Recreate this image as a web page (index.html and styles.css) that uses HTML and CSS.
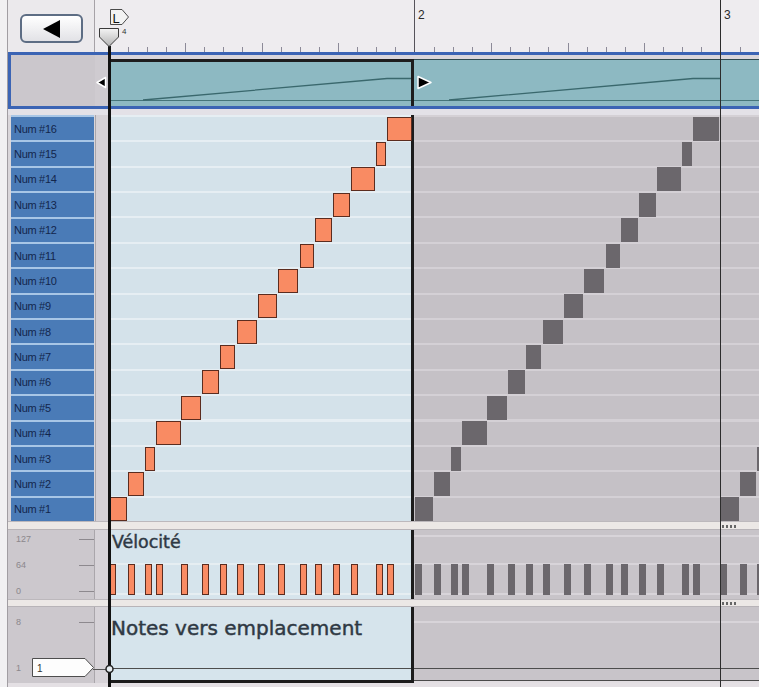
FILE: index.html
```html
<!DOCTYPE html>
<html>
<head>
<meta charset="utf-8">
<title>Editor</title>
<link rel="stylesheet" href="styles.css">
</head>
<body>
<div class="editor">
  <div class="gutter"></div>

  <div class="ruler-head">
    <button class="back-btn" type="button"><span class="tri-left"></span></button>
  </div>
  <div class="ruler">
    <svg class="ticks" width="664" height="52" viewBox="0 0 664 52">
      <path d="M33.5 47V52M52.5 47V52M71.5 47V52M109.5 47V52M128.5 47V52M147.5 47V52M186.5 47V52M205.5 47V52M224.5 47V52M262.5 47V52M281.5 47V52M300.5 47V52M339.5 47V52M358.5 47V52M377.5 47V52M415.5 47V52M434.5 47V52M453.5 47V52M492.5 47V52M511.5 47V52M530.5 47V52M568.5 47V52M587.5 47V52M606.5 47V52M645.5 47V52" stroke="#8c8a98" stroke-width="1"/>
      <path d="M90.5 43V52M167.5 43V52M243.5 43V52M396.5 43V52M473.5 43V52M549.5 43V52" stroke="#8c8a98" stroke-width="1"/>
      <path d="M319.5 0V52" stroke="#56535a" stroke-width="1"/>
    </svg>
    <span class="bar-num bar2">2</span>
    <span class="bar-num bar3">3</span>
    <svg class="loc-l" width="20" height="17" viewBox="0 0 20 17">
      <path d="M0.5 0.5H12L18.5 8L12 15.5H0.5Z" fill="#f3f3f3" stroke="#4a4a4a"/>
      <text x="2.5" y="13.5" font-size="13" font-family="Liberation Sans, Arial, sans-serif" fill="#111">L</text>
    </svg>
    <svg class="ph-head" width="22" height="21" viewBox="0 0 22 21">
      <defs>
        <linearGradient id="phg" x1="0" y1="0" x2="0" y2="1">
          <stop offset="0" stop-color="#f4f4f4"/>
          <stop offset="1" stop-color="#b4b4b4"/>
        </linearGradient>
      </defs>
      <path d="M1.5 1.5H20.5V10L11 19.5L1.5 10Z" fill="url(#phg)" stroke="#3a3a3a"/>
    </svg>
    <span class="ph-num">4</span>
  </div>

  <div class="overview">
    <div class="ov-label"></div>
    <div class="ov-narrow">
      <svg class="ov-left-mark" width="12" height="13" viewBox="0 0 12 13">
        <path d="M10.5 1.5L2 6.5L10.5 11.5Z" fill="#000" stroke="#fff" stroke-width="1.5" stroke-linejoin="round"/>
      </svg>
    </div>
    <svg class="ov-track" width="651" height="51" viewBox="0 0 651 51">
      <rect x="0" y="0" width="651" height="4" fill="#d9d6db"/>
      <rect x="0" y="4" width="651" height="47" fill="#8db9c2"/>
      <rect x="0" y="4" width="651" height="1" fill="#2f4a4e"/>
      <path d="M0 45.5H651" stroke="#46757a" stroke-width="1"/>
      <path d="M35 45L279 23.5H306M341 45L585 23.5H612" stroke="#3a686d" stroke-width="1.3" fill="none"/>
      <rect x="0" y="4" width="306" height="3" fill="#1d1d1d"/>
      <rect x="303" y="4" width="3" height="47" fill="#1d1d1d"/>
      <path d="M310 21.5L323 27.5L310 33.5Z" fill="#000" stroke="#fff" stroke-width="1.5" stroke-linejoin="round"/>
    </svg>
  </div>

  <div class="gap"></div>

  <div class="keys">
    <div class="key">Num #16</div>
    <div class="key">Num #15</div>
    <div class="key">Num #14</div>
    <div class="key">Num #13</div>
    <div class="key">Num #12</div>
    <div class="key">Num #11</div>
    <div class="key">Num #10</div>
    <div class="key">Num #9</div>
    <div class="key">Num #8</div>
    <div class="key">Num #7</div>
    <div class="key">Num #6</div>
    <div class="key">Num #5</div>
    <div class="key">Num #4</div>
    <div class="key">Num #3</div>
    <div class="key">Num #2</div>
    <div class="key">Num #1</div>
  </div>
  <div class="keys-side"></div>
  <div class="canvas notes-canvas">
    <div class="bar1"></div>
    <div class="rest"></div>
    <div class="n o" style="--i:15;--l:1;--w:18"></div>
    <div class="n o" style="--i:14;--l:20;--w:16"></div>
    <div class="n o" style="--i:13;--l:37;--w:10"></div>
    <div class="n o" style="--i:12;--l:48;--w:25"></div>
    <div class="n o" style="--i:11;--l:73;--w:20"></div>
    <div class="n o" style="--i:10;--l:94;--w:17"></div>
    <div class="n o" style="--i:9;--l:112;--w:15"></div>
    <div class="n o" style="--i:8;--l:129;--w:20"></div>
    <div class="n o" style="--i:7;--l:150;--w:19"></div>
    <div class="n o" style="--i:6;--l:170;--w:20"></div>
    <div class="n o" style="--i:5;--l:192;--w:14"></div>
    <div class="n o" style="--i:4;--l:207;--w:17"></div>
    <div class="n o" style="--i:3;--l:225;--w:17"></div>
    <div class="n o" style="--i:2;--l:243;--w:24"></div>
    <div class="n o" style="--i:1;--l:268;--w:10"></div>
    <div class="n o" style="--i:0;--l:279;--w:25"></div>

    <div class="n g" style="--i:15;--l:307;--w:18"></div>
    <div class="n g" style="--i:14;--l:326;--w:16"></div>
    <div class="n g" style="--i:13;--l:343;--w:10"></div>
    <div class="n g" style="--i:12;--l:354;--w:25"></div>
    <div class="n g" style="--i:11;--l:379;--w:20"></div>
    <div class="n g" style="--i:10;--l:400;--w:17"></div>
    <div class="n g" style="--i:9;--l:418;--w:15"></div>
    <div class="n g" style="--i:8;--l:435;--w:20"></div>
    <div class="n g" style="--i:7;--l:456;--w:19"></div>
    <div class="n g" style="--i:6;--l:476;--w:20"></div>
    <div class="n g" style="--i:5;--l:498;--w:14"></div>
    <div class="n g" style="--i:4;--l:513;--w:17"></div>
    <div class="n g" style="--i:3;--l:531;--w:17"></div>
    <div class="n g" style="--i:2;--l:549;--w:24"></div>
    <div class="n g" style="--i:1;--l:574;--w:10"></div>
    <div class="n g" style="--i:0;--l:585;--w:26"></div>

    <div class="n g" style="--i:15;--l:612;--w:19"></div>
    <div class="n g" style="--i:14;--l:632;--w:16"></div>
    <div class="n g" style="--i:13;--l:649;--w:10"></div>
  </div>

  <div class="sep sep-keys"><span class="dots"></span></div>

  <div class="lane-labels vel-labels">
    <div class="lrow"><span>127</span><span class="tick"></span></div>
    <div class="lrow"><span>64</span><span class="tick"></span></div>
    <div class="lrow"><span>0</span><span class="tick"></span></div>
  </div>
  <div class="lane-side vel-side"></div>
  <div class="canvas vel-canvas">
    <div class="bar1"><div class="lane-title">Vélocité</div></div>
    <div class="rest"></div>
    <div class="v vo" style="--l:1"></div>
    <div class="v vo" style="--l:20"></div>
    <div class="v vo" style="--l:37"></div>
    <div class="v vo" style="--l:48"></div>
    <div class="v vo" style="--l:73"></div>
    <div class="v vo" style="--l:94"></div>
    <div class="v vo" style="--l:112"></div>
    <div class="v vo" style="--l:129"></div>
    <div class="v vo" style="--l:150"></div>
    <div class="v vo" style="--l:170"></div>
    <div class="v vo" style="--l:192"></div>
    <div class="v vo" style="--l:207"></div>
    <div class="v vo" style="--l:225"></div>
    <div class="v vo" style="--l:243"></div>
    <div class="v vo" style="--l:268"></div>
    <div class="v vo" style="--l:279"></div>

    <div class="v vg" style="--l:307"></div>
    <div class="v vg" style="--l:326"></div>
    <div class="v vg" style="--l:343"></div>
    <div class="v vg" style="--l:354"></div>
    <div class="v vg" style="--l:379"></div>
    <div class="v vg" style="--l:400"></div>
    <div class="v vg" style="--l:418"></div>
    <div class="v vg" style="--l:435"></div>
    <div class="v vg" style="--l:456"></div>
    <div class="v vg" style="--l:476"></div>
    <div class="v vg" style="--l:498"></div>
    <div class="v vg" style="--l:513"></div>
    <div class="v vg" style="--l:531"></div>
    <div class="v vg" style="--l:549"></div>
    <div class="v vg" style="--l:574"></div>
    <div class="v vg" style="--l:585"></div>

    <div class="v vg" style="--l:612"></div>
    <div class="v vg" style="--l:632"></div>
    <div class="v vg" style="--l:649"></div>
  </div>

  <div class="sep sep-vel"><span class="dots dots2"></span></div>

  <div class="lane-labels pos-labels">
    <div class="lrow"><span>8</span><span class="tick"></span></div>
    <div class="lrow slot-row">
      <span class="slot-num">1</span>
      <svg class="slot-box" width="62" height="19" viewBox="0 0 62 19">
        <path d="M0.5 0.5H53L61.5 9.5L53 18.5H0.5Z" fill="#fdfdfd" stroke="#4e4e4e"/>
        <text x="5" y="14" font-size="10" font-family="Liberation Sans, Arial, sans-serif" fill="#333">1</text>
      </svg>
    </div>
  </div>
  <div class="lane-side pos-side"></div>
  <div class="canvas pos-canvas">
    <div class="bar1"><div class="lane-title pos-title">Notes vers emplacement</div></div>
    <div class="rest"></div>
  </div>

  <div class="bottom"></div>

  <div class="playhead"></div>
  <div class="barline3"></div>
  <svg class="slot-link" width="22" height="14" viewBox="0 0 22 14">
    <path d="M1 7.5H14" stroke="#555" stroke-width="1"/>
    <circle cx="17.5" cy="7" r="3.5" fill="#e8eef2" stroke="#222" stroke-width="1.5"/>
  </svg>
</div>
</body>
</html>
```

FILE: styles.css
```css
* { box-sizing: border-box; }

body {
  margin: 0;
  background: #ffffff;
}

.editor {
  position: relative;
  width: 759px;
  height: 687px;
  overflow: hidden;
  display: grid;
  grid-template-columns: 8px 87px 13px 651px;
  grid-template-rows: 52px 57px 6px 406px 9px 69px 8px 76px 4px;
  background: #e9e7ea;
  font-family: "Liberation Sans", Arial, sans-serif;
}

.gutter {
  grid-column: 1;
  grid-row: 1 / -1;
  background: #f1f0f2;
  border-right: 1px solid #a19da2;
}

/* ruler */
.ruler-head {
  grid-column: 2;
  grid-row: 1;
  background: #ebe9ec;
  border-right: 1px solid #a6a2a7;
  padding: 14px 0 0 12px;
}

.back-btn {
  width: 63px;
  height: 29px;
  padding: 0;
  border: 2px solid #5d6d84;
  border-radius: 6px;
  background: linear-gradient(#ffffff, #e2e2e6);
  display: flex;
  align-items: center;
  justify-content: center;
}

.tri-left {
  width: 0;
  height: 0;
  border-right: 17px solid #000;
  border-top: 9px solid transparent;
  border-bottom: 9px solid transparent;
}

.ruler {
  grid-column: 3 / 5;
  grid-row: 1;
  position: relative;
  background: #eeecef;
}

.ticks { display: block; }

.bar-num {
  position: absolute;
  top: 8px;
  font-size: 12px;
  line-height: 14px;
  color: #2a2a2a;
}
.bar2 { left: 323px; }
.bar3 { left: 629px; }

.loc-l {
  position: absolute;
  left: 15px;
  top: 9px;
  z-index: 6;
}

.ph-head {
  position: absolute;
  left: 3px;
  top: 27px;
  z-index: 6;
}

.ph-num {
  position: absolute;
  left: 27px;
  top: 27px;
  font-size: 8px;
  line-height: 9px;
  color: #333;
}

/* overview */
.overview {
  grid-column: 2 / 5;
  grid-row: 2;
  display: flex;
  border: 3px solid #3b64b4;
  border-right: 0;
}

.ov-label {
  width: 84px;
  flex: none;
  background: #cbc7cc;
}

.ov-narrow {
  width: 13px;
  flex: none;
  position: relative;
  background: #cfcbd0;
}

.ov-left-mark {
  position: absolute;
  left: 0;
  top: 21px;
}

.ov-track {
  display: block;
  flex: none;
}

.gap {
  grid-column: 2 / 5;
  grid-row: 3;
  background: #e3e1e7;
}

/* keys */
.keys {
  grid-column: 2;
  grid-row: 4;
  display: grid;
  grid-template-rows: repeat(16, 1fr);
  background: #dad6da;
  padding: 0 1px 0 3px;
}

.key {
  background: #4a7bb7;
  border-top: 2px solid #a8c6e6;
  color: #13264c;
  font-size: 11px;
  letter-spacing: -0.3px;
  padding-left: 3px;
  display: flex;
  align-items: center;
}

.keys-side {
  grid-column: 3;
  grid-row: 4;
  background: #d5d1d6;
  border-left: 1px solid #aaa6ab;
}

.canvas {
  position: relative;
  display: flex;
}

.bar1 {
  width: 306px;
  flex: none;
  border-right: 3px solid #1c1c1c;
}

.rest { flex: 1; }

.notes-canvas {
  grid-column: 4;
  grid-row: 4;
}

.notes-canvas .bar1 {
  background: repeating-linear-gradient(to bottom, #e6eef3 0 2px, #d4e2ea 2px 25.375px);
}

.notes-canvas .rest {
  background: repeating-linear-gradient(to bottom, #d4d0d5 0 2px, #c5c1c6 2px 25.375px);
}

.n {
  position: absolute;
  left: calc(var(--l) * 1px);
  width: calc(var(--w) * 1px);
  top: calc(var(--i) * 25.375px + 1.7px);
  height: 24px;
}

.o {
  background: #f98b63;
  border: 1px solid #5b2c1f;
}

.g { background: #6b676c; }

/* lane separators */
.sep {
  grid-column: 2 / 5;
  position: relative;
  background: #ece8e6;
  border-top: 1px solid #bcb8bc;
  border-bottom: 1px solid #b8b4b8;
}
.sep-keys { grid-row: 5; }
.sep-vel { grid-row: 7; }

.dots {
  position: absolute;
  left: 714px;
  top: 3px;
  width: 15px;
  height: 3px;
  background: repeating-linear-gradient(to right, #666 0 2px, transparent 2px 4px);
}
.dots2 { top: 2px; }

/* lane labels */
.lane-labels {
  grid-column: 2;
  display: flex;
  flex-direction: column;
  justify-content: space-between;
  background: #ccc8cd;
  border-right: 1px solid #aaa6ab;
  padding-left: 8px;
  font-size: 9px;
  color: #8b878c;
}

.vel-labels {
  grid-row: 6;
  padding-top: 4px;
  padding-bottom: 3px;
}

.pos-labels {
  grid-row: 8;
  padding-top: 9px;
  padding-bottom: 6px;
}

.lrow {
  height: 10px;
  display: flex;
  align-items: center;
}

.pos-labels .lrow:first-child { height: 12px; }

.tick {
  margin-left: auto;
  width: 15px;
  height: 1px;
  background: #8d898e;
}

.slot-row { height: 19px; }

.slot-num { width: 16px; flex: none; }

.slot-box { display: block; flex: none; }

.lane-side {
  grid-column: 3;
  background: #d7d3d8;
}
.vel-side { grid-row: 6; }
.pos-side { grid-row: 8; }

/* velocity lane */
.vel-canvas {
  grid-column: 4;
  grid-row: 6;
}

.vel-canvas .bar1 {
  background:
    linear-gradient(to bottom, transparent 33px, #e6eef2 33px 35px, transparent 35px 63px, #e6eef2 63px 65px, transparent 65px),
    #d6e4ec;
}

.vel-canvas .rest {
  background:
    linear-gradient(to bottom, transparent 5px, #d8d4d9 5px 7px, transparent 7px 33px, #d8d4d9 33px 35px, transparent 35px 63px, #d8d4d9 63px 65px, transparent 65px),
    #c8c4c9;
}

.lane-title {
  font-family: "DejaVu Sans", Verdana, sans-serif;
  font-size: 17.4px;
  line-height: 20px;
  color: #2f3944;
  -webkit-text-stroke: 0.45px #2f3944;
  padding: 2px 0 0 4px;
  white-space: nowrap;
}

.pos-title {
  font-size: 20px;
  line-height: 24px;
  padding-top: 9px;
  padding-left: 3px;
}

.v {
  position: absolute;
  left: calc(var(--l) * 1px);
  top: 34px;
  width: 7px;
  height: 31px;
}

.vo {
  background: #f98b63;
  border: 1px solid #5b2c1f;
}

.vg { background: #6b676c; }

/* position lane */
.pos-canvas {
  grid-column: 4;
  grid-row: 8;
}

.pos-canvas .bar1 {
  border-bottom: 3px solid #1c1c1c;
  background:
    linear-gradient(to bottom, transparent 61px, #4d4d4d 61px 62px, transparent 62px),
    #d6e4ec;
}

.pos-canvas .rest {
  background:
    linear-gradient(to bottom, transparent 14px, #d8d4d9 14px 16px, transparent 16px 61px, #4d4d4d 61px 62px, transparent 62px 73px, #4a4a4a 73px 74px, #e2dee2 74px),
    #c8c4c9;
}

.bottom {
  grid-column: 2 / 5;
  grid-row: 9;
  background: #e4e0e4;
}

/* overlays */
.playhead {
  position: absolute;
  left: 108px;
  top: 46px;
  bottom: 0;
  width: 3px;
  background: #111;
  z-index: 5;
}

.barline3 {
  position: absolute;
  left: 720px;
  top: 0;
  bottom: 0;
  width: 1px;
  background: #2c2c2c;
  z-index: 4;
}

.slot-link {
  position: absolute;
  left: 92px;
  top: 662px;
  z-index: 6;
}
```
